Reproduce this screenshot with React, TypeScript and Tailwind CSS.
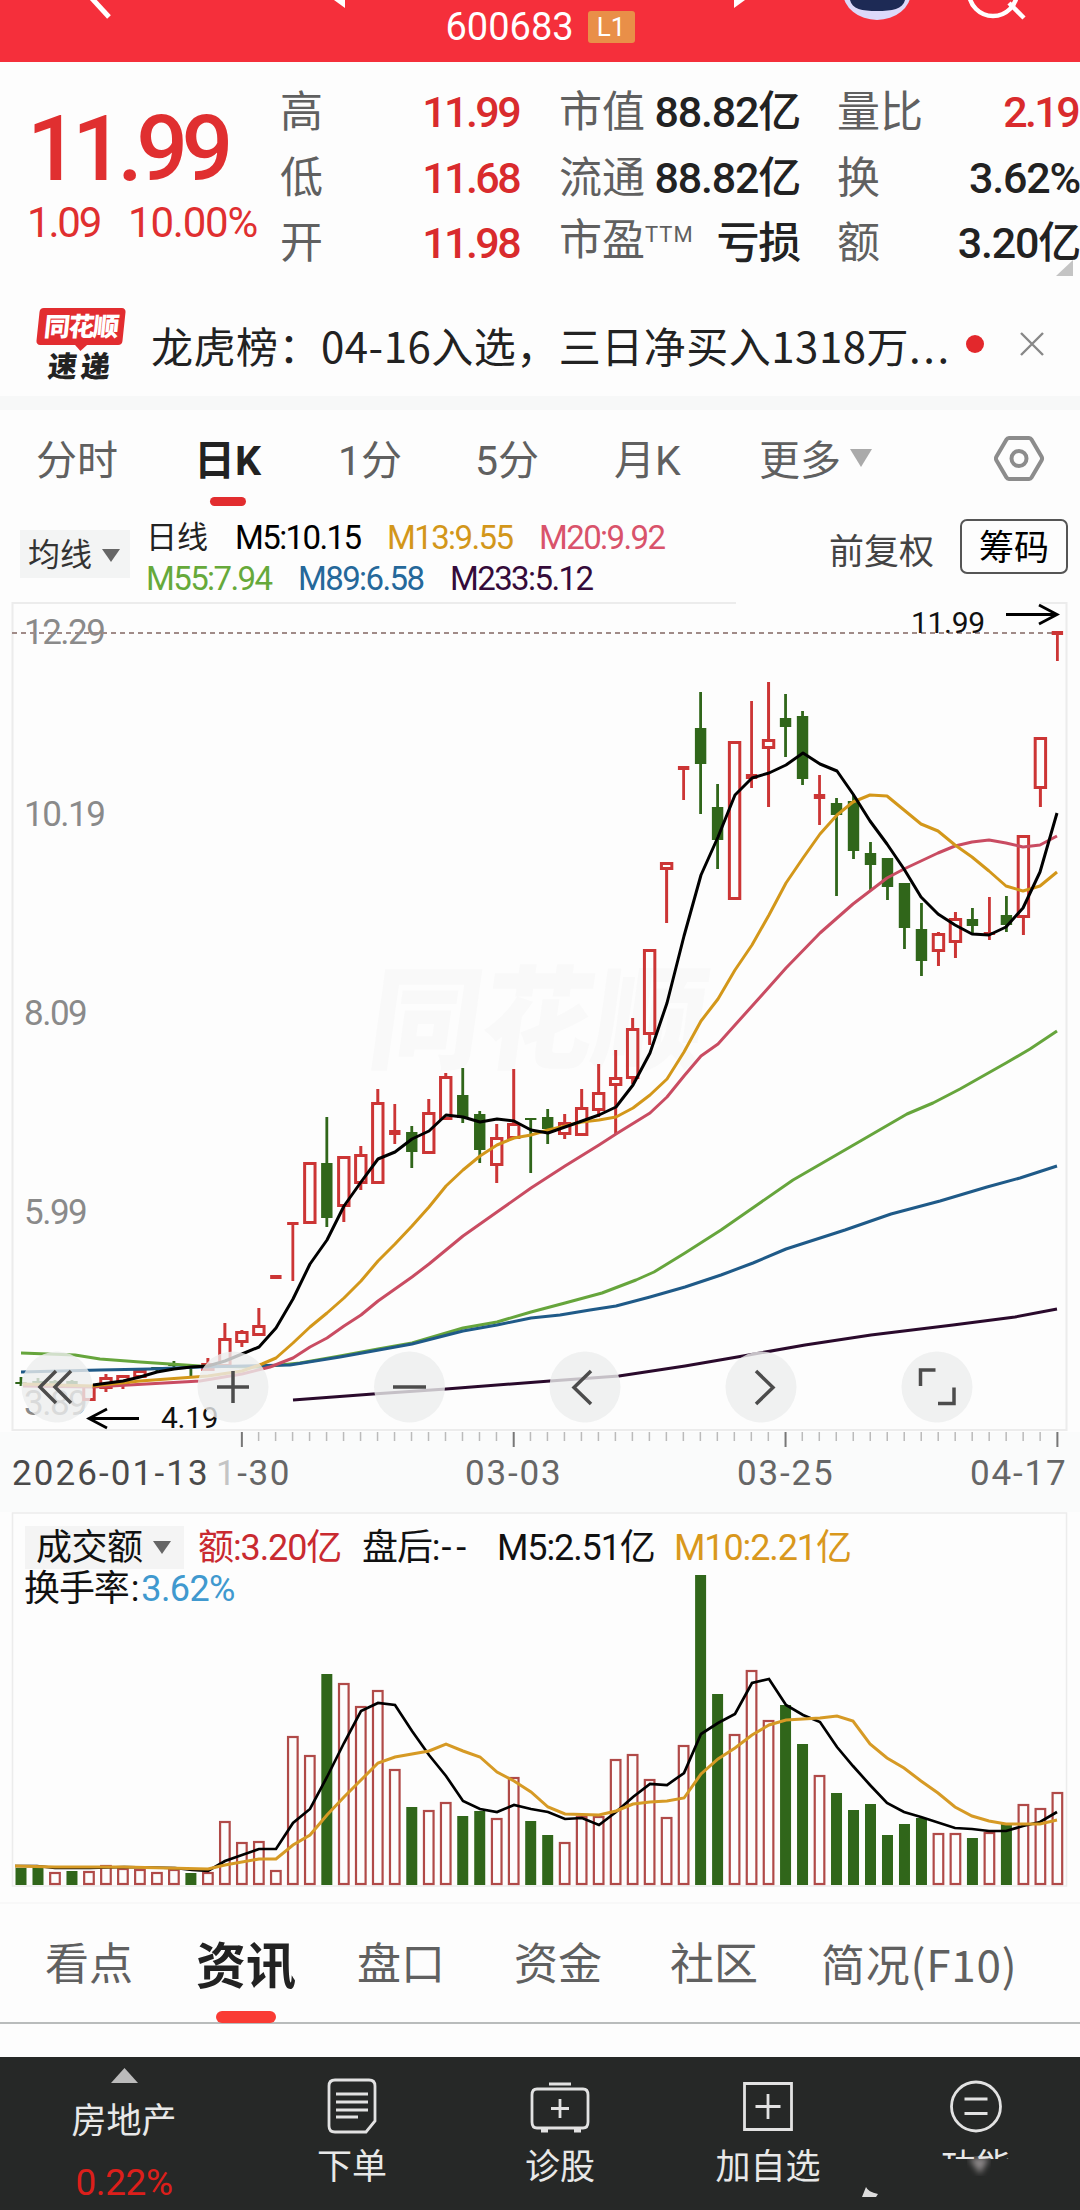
import type { ReactNode } from 'react'
import clsx from 'clsx'

// x of the n-th trading day, shared by the price and the turnover chart
const dayX = (n: number) => 21 + n * 16.99

type Candle = ['r' | 'g', number, number, number, number]

// colour, high, body top, body bottom, low
const candles: Candle[] = [
  ['g', 1377, 1382, 1384, 1386],
  ['g', 1378, 1381, 1385, 1386],
  ['g', 1380, 1381, 1385, 1388],
  ['g', 1380, 1381, 1386, 1388],
  ['r', 1386, 1386, 1400, 1400],
  ['r', 1374, 1378, 1388, 1392],
  ['r', 1376, 1376, 1385, 1389],
  ['r', 1369, 1371, 1377, 1377],
  ['g', 1367, 1367, 1369, 1372],
  ['g', 1361, 1364, 1366, 1367],
  ['g', 1366, 1366, 1368, 1376],
  ['r', 1358, 1364, 1370, 1370],
  ['r', 1323, 1339, 1366, 1366],
  ['r', 1330, 1332, 1342, 1347],
  ['r', 1308, 1326, 1335, 1335],
  ['r', 1275, 1275, 1279, 1279],
  ['r', 1222, 1222, 1225, 1281],
  ['r', 1162, 1163, 1223, 1223],
  ['g', 1117, 1163, 1218, 1227],
  ['r', 1157, 1157, 1206, 1222],
  ['r', 1146, 1155, 1183, 1190],
  ['r', 1089, 1103, 1183, 1183],
  ['r', 1104, 1130, 1135, 1144],
  ['g', 1126, 1132, 1152, 1168],
  ['r', 1099, 1113, 1153, 1153],
  ['r', 1073, 1077, 1119, 1119],
  ['g', 1068, 1095, 1118, 1123],
  ['g', 1111, 1114, 1150, 1163],
  ['r', 1124, 1138, 1165, 1183],
  ['r', 1069, 1124, 1138, 1138],
  ['g', 1118, 1118, 1120, 1173],
  ['g', 1109, 1117, 1129, 1144],
  ['r', 1114, 1123, 1134, 1139],
  ['r', 1089, 1108, 1135, 1135],
  ['r', 1064, 1093, 1110, 1117],
  ['r', 1050, 1078, 1085, 1134],
  ['r', 1018, 1029, 1078, 1084],
  ['r', 949, 950, 1034, 1045],
  ['r', 862, 863, 869, 923],
  ['r', 766, 766, 770, 800],
  ['g', 692, 728, 764, 814],
  ['g', 784, 807, 840, 869],
  ['r', 741, 742, 899, 899],
  ['r', 701, 774, 779, 788],
  ['r', 682, 740, 748, 807],
  ['g', 694, 718, 727, 757],
  ['g', 711, 716, 779, 785],
  ['r', 775, 794, 799, 825],
  ['g', 798, 803, 815, 896],
  ['g', 794, 801, 851, 859],
  ['g', 842, 853, 865, 890],
  ['g', 858, 858, 887, 900],
  ['g', 883, 883, 928, 949],
  ['g', 903, 929, 961, 976],
  ['r', 932, 934, 951, 966],
  ['r', 912, 919, 942, 958],
  ['g', 908, 919, 926, 934],
  ['r', 897, 932, 935, 940],
  ['g', 896, 915, 925, 932],
  ['r', 835, 836, 917, 935],
  ['r', 737, 738, 788, 807],
  ['r', 631, 631, 635, 661],
]

const turnover = [
  'g1868', 'g1866', 'r1872', 'g1871', 'r1871', 'r1865', 'r1868', 'r1869', 'r1872', 'r1869',
  'g1873', 'r1872', 'r1821', 'r1842', 'r1841', 'r1870', 'r1736', 'r1755', 'g1674', 'r1683',
  'r1706', 'r1690', 'r1769', 'g1807', 'r1810', 'r1802', 'g1816', 'g1811', 'r1818', 'r1777',
  'g1821', 'g1835', 'r1842', 'r1816', 'r1816', 'r1759', 'r1754', 'r1779', 'r1817', 'r1745',
  'g1575', 'g1694', 'r1734', 'r1670', 'r1720', 'g1705', 'g1744', 'r1775', 'g1793', 'g1810',
  'g1804', 'g1835', 'g1824', 'g1818', 'r1833', 'r1833', 'g1838', 'r1832', 'g1823', 'r1804',
  'r1808', 'r1792',
]

const priceLines = [
  {
    color: '#66a53c',
    points:
      '21,1353 75,1355 100,1359 140,1362 200,1366 260,1367 300,1363 340,1356 378,1349 412,1343 463,1328 497,1322 531,1312 565,1303 602,1293 636,1280 654,1272 685,1253 721,1230 757,1205 793,1180 857,1143 907,1114 933,1103 960,1089 1006,1063 1030,1049 1057,1031',
  },
  {
    color: '#1f5a88',
    points:
      '21,1372 100,1370 150,1369 200,1367 290,1365 340,1357 412,1344 463,1331 497,1325 531,1318 560,1315 590,1310 616,1306 650,1297 685,1287 721,1275 753,1263 786,1249 845,1230 891,1214 940,1201 987,1187 1020,1178 1057,1166',
  },
  {
    color: '#2a0a2c',
    points:
      '293,1400 373,1394 446,1389 550,1381 619,1376 685,1366 743,1356 805,1345 871,1335 953,1325 1015,1317 1057,1309',
  },
  {
    color: '#c94c62',
    points:
      '23,1386 93,1387 200,1381 242,1374 270,1367 293,1358 310,1347 327,1338 344,1326 361,1315 378,1301 412,1277 429,1264 463,1236 497,1212 531,1188 565,1166 599,1145 616,1134 650,1113 667,1097 684,1076 701,1056 718,1044 735,1025 753,1005 786,968 820,933 853,904 887,878 904,869 921,861 938,853 955,846 972,842 989,840 1006,843 1023,847 1040,845 1057,836',
  },
  {
    color: '#d3971a',
    points:
      '23,1384 93,1386 140,1381 208,1376 242,1371 262,1364 276,1358 293,1343 310,1327 327,1313 344,1298 361,1281 378,1261 395,1244 412,1226 429,1207 446,1186 463,1170 480,1156 497,1145 514,1138 531,1135 548,1130 582,1122 599,1120 616,1117 633,1108 650,1095 667,1079 684,1052 701,1021 718,999 735,970 752,945 769,915 786,883 803,858 820,834 837,815 853,802 870,795 887,796 904,810 921,824 938,831 955,845 972,857 989,871 1006,886 1023,891 1040,886 1057,872',
  },
  {
    color: '#000000',
    points:
      '93,1385 123,1381 140,1377 157,1372 174,1369 191,1367 208,1366 225,1361 242,1354 259,1347 276,1328 293,1299 310,1264 327,1240 344,1206 361,1182 378,1159 395,1152 412,1139 429,1131 446,1115 463,1117 480,1122 497,1119 514,1121 531,1130 548,1133 565,1127 582,1121 599,1115 616,1107 633,1085 650,1053 667,1003 684,936 701,875 718,837 735,795 752,778 769,773 786,765 803,753 820,764 837,771 853,794 870,821 887,844 904,869 921,897 938,914 955,925 972,934 989,935 1006,927 1023,908 1040,872 1057,813',
  },
]

const volumeM5 =
  '15,1866 37,1866 55,1868 90,1868 124,1867 175,1868 192,1870 208,1871 225,1861 242,1855 259,1849 276,1849 293,1823 310,1809 327,1777 344,1743 361,1711 378,1703 395,1705 412,1731 429,1755 446,1776 463,1801 480,1809 497,1812 514,1805 531,1809 548,1812 565,1819 582,1818 599,1825 616,1812 633,1797 650,1784 667,1785 684,1773 701,1734 718,1723 735,1714 752,1683 769,1679 786,1705 803,1715 820,1722 837,1747 853,1766 870,1785 887,1803 904,1812 921,1817 955,1828 972,1829 989,1831 1006,1831 1023,1826 1040,1822 1057,1812'
const volumeM10 =
  '15,1866 55,1867 124,1867 208,1869 225,1865 259,1859 276,1859 293,1845 310,1835 327,1815 344,1797 361,1780 378,1763 395,1757 429,1751 446,1744 463,1751 480,1757 497,1772 514,1781 531,1792 548,1807 565,1814 599,1815 616,1811 633,1804 650,1802 667,1801 684,1798 701,1774 718,1759 735,1748 752,1735 769,1725 786,1720 820,1718 837,1716 853,1721 870,1744 887,1758 904,1768 921,1781 938,1793 955,1807 972,1816 989,1821 1006,1824 1040,1824 1057,1820'

export default function App() {
  return (
    <main className="flex h-[2210px] w-[1080px] flex-col overflow-hidden bg-[#fdfdfd] font-['Roboto','Noto_Sans_CJK_SC',sans-serif] whitespace-nowrap text-[#222]">
      <TopBar />
      <Quote />
      <NewsStrip />
      <div className="h-[14px] shrink-0 bg-[#f7f8f8]" />
      <PeriodTabs />
      <AverageLegend />
      <PriceChart />
      <DateAxis />
      <TurnoverChart />
      <InfoTabs />
      <BottomBar />
    </main>
  )
}

function TopBar() {
  return (
    <header className="relative flex h-[62px] shrink-0 items-start justify-center bg-[#f52f3b]">
      <svg className="absolute inset-0" width="1080" height="62" viewBox="0 0 1080 62">
        <path d="M86-8 109 17" stroke="#fff" strokeWidth="5" />
        <path d="M334 0h11v8zM745 0h-11v8z" fill="#fff" />
        <ellipse cx="877" cy="-8" rx="34" ry="28" fill="#dcd9fa" />
        <path d="M850 0c2 9 12 11 27 11s26-2 28-11z" fill="#1d2a55" />
        <circle cx="993" cy="-8" r="24" fill="none" stroke="#fff" strokeWidth="4.500" />
        <path d="m1009 3 15 15" stroke="#fff" strokeWidth="4.500" />
      </svg>
      <div className="flex items-center gap-[13px]">
        <span className="w-[129px] pt-px text-[38px] leading-[52px] text-white">600683</span>
        <span className="mt-[1px] flex h-[32px] w-[47px] items-center justify-center rounded-[3px] bg-[#e98f48] text-[26px] text-white">
          L1
        </span>
      </div>
    </header>
  )
}

function Quote() {
  return (
    <section className="flex h-[228px] shrink-0 pt-[18px]">
      <div className="w-[280px] shrink-0 text-[#e02f30]">
        <p className="mt-[21px] pl-[27px] text-[91px] leading-[96px] font-medium tracking-[-6.5px]">
          11.99
        </p>
        <p className="flex pt-[1px] pl-[27px] text-[42px] leading-[50px] tracking-[-1.2px]">
          <span className="w-[101px] tracking-[-2.2px]">1.09</span>
          <span>10.00%</span>
        </p>
      </div>
      <div className="w-[242px] shrink-0">
        <QuoteRow label="高" value="11.99" tone="up" />
        <QuoteRow label="低" value="11.68" tone="up" />
        <QuoteRow label="开" value="11.98" tone="up" />
      </div>
      <div className="ml-[37px] w-[242px] shrink-0">
        <QuoteRow label="市值" value="88.82亿" />
        <QuoteRow label="流通" value="88.82亿" />
        <QuoteRow
          label={
            <>
              市盈<span className="relative -top-[13px] text-[22px] tracking-[1px]">TTM</span>
            </>
          }
          value="亏损"
        />
      </div>
      <div className="relative ml-[36px] w-[244px] shrink-0">
        <QuoteRow label="量比" value="2.19" tone="up" />
        <QuoteRow label="换" value="3.62%" />
        <QuoteRow label="额" value="3.20亿" />
        <svg className="absolute right-[8px] bottom-[14px]" width="17" height="16">
          <path d="M17 0v16H0z" fill="#c4c4c4" />
        </svg>
      </div>
    </section>
  )
}

function QuoteRow({ label, value, tone }: { label: ReactNode; value: string; tone?: 'up' }) {
  return (
    <div className="flex h-[65.5px] items-center justify-between text-[43px] leading-[65px]">
      <span className="text-[#606060]">{label}</span>
      <span
        className={clsx(
          'font-medium',
          tone === 'up'
            ? 'pr-[3px] tracking-[-2.6px] text-[#d92b2d]'
            : 'pr-[1px] tracking-[-1.2px] text-[#222]',
        )}
      >
        {value}
      </span>
    </div>
  )
}

function NewsStrip() {
  return (
    <section className="flex h-[106px] shrink-0 items-start">
      <div className="ml-[38px] w-[113px] pt-[18px]">
        <div className="relative flex h-[37px] w-[86px] -skew-x-6 items-center justify-center rounded-[4px] bg-[#e22d30] text-[26px] leading-none font-black tracking-[-1.5px] text-white">
          同花顺
          <svg className="absolute top-[36px] left-[38px]" width="14" height="7">
            <path d="M0 0h14L7 7z" fill="#e22d30" />
          </svg>
        </div>
        <p className="mt-[7px] ml-[10px] w-[70px] -skew-x-6 text-[29px] leading-[30px] font-black tracking-[4px] text-[#222]">
          速递
        </p>
      </div>
      <p className="w-[806px] pt-[23px] font-['Noto_Sans_CJK_SC',sans-serif] text-[42px] leading-[64px] tracking-[0.5px]">
        龙虎榜：04-16入选，三日净买入1318万<span className="tracking-[2.5px]">...</span>
      </p>
      <span className="mt-[45px] ml-[9px] size-[18px] rounded-full bg-[#e3282c]" />
      <svg className="mt-[42px] ml-[35px]" width="26" height="24" viewBox="0 0 26 24">
        <path d="m2 1 22 22M24 1 2 23" stroke="#888" strokeWidth="2.400" />
      </svg>
    </section>
  )
}

function PeriodTabs() {
  return (
    <nav className="flex h-[104px] shrink-0 items-start pt-[20px] pl-[36px] text-[41px] leading-[62px] text-[#606060]">
      <span className="w-[158px]">分时</span>
      <span className="flex w-[144px] flex-col font-bold text-[#222]">
        日K
        <i className="mt-[5px] ml-[16px] h-[9px] w-[36px] rounded-full bg-[#e22d2f]" />
      </span>
      <span className="w-[137px]">1分</span>
      <span className="w-[139px]">5分</span>
      <span className="w-[145px]">月K</span>
      <span className="w-[91px]">更多</span>
      <svg className="mt-[19px]" width="23" height="18">
        <path d="M0 0h22L11 18z" fill="#aaa" />
      </svg>
      <svg className="mt-[5px] ml-[121px]" width="52" height="48" viewBox="0 0 52 48">
        <path
          d="M15 3h20a3 3 0 0 1 2.500 1.500l10 17a4 4 0 0 1 0 4l-10 17a3 3 0 0 1-2.500 1.500H15a3 3 0 0 1-2.500-1.500l-10-17a4 4 0 0 1 0-4l10-17A3 3 0 0 1 15 3z"
          fill="none"
          stroke="#8c8c8c"
          strokeWidth="4"
        />
        <circle cx="25" cy="23.500" r="7.500" fill="none" stroke="#8c8c8c" strokeWidth="4" />
      </svg>
    </nav>
  )
}

function AverageLegend() {
  return (
    <section className="flex h-[88px] shrink-0 items-start">
      <div className="mt-[16px] ml-[20px] flex h-[48px] w-[110px] items-center gap-[10px] bg-[#f3f4f4] pt-[2px] pl-[8px] text-[32px] text-[#333]">
        均线
        <Caret />
      </div>
      <div className="ml-[16px] w-[683px] text-[33px] leading-[41px] tracking-[-1.6px]">
        <p className="flex pt-[3px]">
          <span className="w-[89px] text-[31px] tracking-normal">日线</span>
          <span className="w-[152px] text-black">M5:10.15</span>
          <span className="w-[152px] text-[#d3971a]">M13:9.55</span>
          <span className="text-[#d9536b]">M20:9.92</span>
        </p>
        <p className="flex">
          <span className="w-[152px] text-[#66a93a]">M55:7.94</span>
          <span className="w-[152px] text-[#25689a]">M89:6.58</span>
          <span className="text-[#350b3a]">M233:5.12</span>
        </p>
      </div>
      <span className="mt-[13px] w-[131px] text-[35px] leading-[52px] text-[#444]">前复权</span>
      <span className="mt-[5px] flex h-[55px] w-[108px] items-center justify-center rounded-[7px] border-2 border-[#555] pt-[4px] text-[35px] leading-none text-black">
        筹码
      </span>
    </section>
  )
}

function Caret() {
  return (
    <svg width="18" height="13">
      <path d="M0 0h18L9 13z" fill="#666" />
    </svg>
  )
}

function PriceChart() {
  return (
    <section className="h-[830px] shrink-0">
      <svg className="overflow-visible" width="1080" height="830" viewBox="0 602 1080 830">
        <path d="M736 603H12.500V1430H1066.500V603H1040" fill="none" stroke="#ececec" strokeWidth="2" />
        <text
          x="368"
          y="1060"
          fontSize="112"
          fontWeight="900"
          fill="#f9f9f9"
          transform="skewX(-8) translate(146 0)"
        >
          同花顺
        </text>
        <g fontSize="35" fill="#8a8a8a" letterSpacing="-1.500">
          <text x="24" y="644">12.29</text>
          <text x="24" y="826">10.19</text>
          <text x="24" y="1025">8.09</text>
          <text x="24" y="1224">5.99</text>
          <text x="24" y="1415">3.89</text>
        </g>
        <path d="M12 633H1052" stroke="#a08b88" strokeWidth="1.800" strokeDasharray="5 4" />

        {candles.map((candle, n) => (
          <CandleMark key={n} n={n} candle={candle} />
        ))}
        {priceLines.map((line) => (
          <polyline
            key={line.color}
            points={line.points}
            fill="none"
            stroke={line.color}
            strokeWidth="3"
            strokeLinejoin="round"
          />
        ))}

        <g fontSize="30" fill="#111" letterSpacing="-0.300">
          <text x="911" y="633">11.99</text>
          <text x="161" y="1428">4.19</text>
        </g>
        <path
          d="M1006 614.500h51M1039 605l18 9.500-18 9.500M139 1418.500H90M107 1409l-18 9.500 18 9.500"
          fill="none"
          stroke="#000"
          strokeWidth="2.800"
        />

        {[57, 233, 409.5, 585, 761, 937].map((x) => (
          <circle key={x} cx={x} cy="1387" r="35.500" fill="#ecedee" fillOpacity="0.800" />
        ))}
        <g fill="none" stroke="#4c4c4c" strokeWidth="3.500">
          <path d="m56 1371-16 16 16 16M71 1371l-16 16 16 16" />
          <path d="M217 1387h32M233 1371v32M393 1387h33" />
          <path d="m591 1371-17 16.500 17 16.500M756 1371l17 16.500-17 16.500" />
          <path d="M920.500 1386v-16h15M938 1403.500h16v-16" />
        </g>
      </svg>
    </section>
  )
}

function CandleMark({ n, candle }: { n: number; candle: Candle }) {
  const [tone, high, top, bottom, low] = candle
  const x = dayX(n)
  const color = tone === 'r' ? '#cc3535' : '#30661a'

  // thin bodies have no room for a hollow centre
  if (tone === 'g' || bottom - top < 6) {
    return (
      <g fill={color}>
        <rect x={x - 1.4} y={high} width="2.800" height={low - high} />
        <rect x={x - 5.7} y={top} width="11.400" height={bottom - top} />
      </g>
    )
  }
  return (
    <g stroke={color} strokeWidth="3" fill="none">
      <path d={`M${x} ${high}V${top}M${x} ${bottom}V${low}`} />
      <rect x={x - 5.2} y={top + 0.5} width="10.400" height={bottom - top - 1} />
    </g>
  )
}

function DateAxis() {
  return (
    <section className="h-[80px] shrink-0 bg-[#fafbfb]">
      <svg className="block" width="1080" height="18" viewBox="0 1432 1080 18">
        {Array.from({ length: 49 }, (_, k) => {
          const long = k % 16 === 0
          return (
            <rect
              key={k}
              x={dayX(k + 13) - 1}
              y="1432"
              width={long ? 2 : 1.5}
              height={long ? 15 : 9}
              fill={long ? '#777' : '#bbb'}
            />
          )
        })}
      </svg>
      <div className="flex pt-px pl-[12px] text-[35px] leading-[46px] text-[#666]">
        <span className="w-[204px] tracking-[2.1px] text-[#4a4a4a]">2026-01-13</span>
        <span className="w-[249px] tracking-[1.6px]">
          <span className="text-[#c4c4c4]">1</span>-30
        </span>
        <span className="w-[272px] tracking-[1.8px]">03-03</span>
        <span className="w-[233px] tracking-[1.8px]">03-25</span>
        <span className="tracking-[1.8px]">04-17</span>
      </div>
    </section>
  )
}

function TurnoverChart() {
  return (
    <section className="relative h-[390px] shrink-0">
      <svg className="absolute inset-0" width="1080" height="390" viewBox="0 1512 1080 390">
        <rect x="12.500" y="1513" width="1054" height="373" fill="none" stroke="#ececec" strokeWidth="1.500" />
        {turnover.map((bar, n) => {
          const top = Number(bar.slice(1))
          return bar[0] === 'g' ? (
            <rect key={n} x={dayX(n) - 5.5} y={top} width="11" height={1885 - top} fill="#30661a" />
          ) : (
            <rect
              key={n}
              x={dayX(n) - 4.8}
              y={top + 1}
              width="9.600"
              height={1883 - top}
              fill="none"
              stroke="#b04a48"
              strokeWidth="2.200"
            />
          )
        })}
        <polyline points={volumeM5} fill="none" stroke="#000" strokeWidth="2.700" />
        <polyline points={volumeM10} fill="none" stroke="#d69a25" strokeWidth="3" />
      </svg>
      <div className="relative text-[36px] leading-[40px] tracking-[-1.1px]">
        <div className="flex items-center pt-[14px] pl-[25px] text-[#111]">
          <span className="mr-[14px] flex h-[43px] w-[159px] items-center gap-[10px] bg-[#f4f4f4] pl-[11px] tracking-[-0.5px]">
            成交额
            <Caret />
          </span>
          <span className="w-[164px] text-[#c92a30]">额:3.20亿</span>
          <span className="w-[135px]">
            盘后:<span className="pl-[2px] tracking-[5px]">--</span>
          </span>
          <span className="w-[177px]">M5:2.51亿</span>
          <span className="text-[#d9981c]">M10:2.21亿</span>
        </div>
        <p className="pl-[24px] text-[#111]">
          换手率<span className="pr-[3px] pl-[2px]">:</span>
          <span className="tracking-[-0.6px] text-[#4099cf]">3.62%</span>
        </p>
      </div>
    </section>
  )
}

function InfoTabs() {
  return (
    <nav className="flex h-[155px] shrink-0 flex-col border-t-2 border-[#f8f8f8]">
      <div className="flex h-[120px] items-start border-b-2 border-[#b9bcbc] pt-[28px] pl-[45px] text-[44px] leading-[66px] text-[#606060]">
        <span className="w-[151px]">看点</span>
        <span className="flex w-[161px] flex-col pt-[3px] text-[50px] leading-[64px] font-bold text-[#222]">
          资讯
          <i className="mt-[12px] ml-[20px] h-[12px] w-[60px] rounded-full bg-[#fa3b34]" />
        </span>
        <span className="w-[157px]">盘口</span>
        <span className="w-[156px]">资金</span>
        <span className="w-[151px]">社区</span>
        <span className="-mt-[2px] font-['Noto_Sans_CJK_SC',sans-serif] tracking-[0.8px]">
          简况(F10)
        </span>
      </div>
    </nav>
  )
}

function BottomBar() {
  return (
    <footer className="flex h-[153px] shrink-0 bg-[#262827] text-[35px] leading-[50px] text-[#e8e8e8]">
      <div className="flex w-[248px] flex-col items-center">
        <svg className="mt-[11px]" width="27" height="15">
          <path d="M13.500 0 27 15H0z" fill="#bbb" />
        </svg>
        <span className="mt-[14px]">房地产</span>
        <span className="mt-[11px] text-[37px] tracking-[-0.4px] text-[#dc1f1b]">0.22%</span>
      </div>
      <BarItem label="下单">
        <path d="M8 3h34q6 0 6 6v35l-9 11H8q-6 0-6-6V9q0-6 6-6z" />
        <path d="M9 17h32M9 25h32M9 33h32M9 40h22" />
      </BarItem>
      <BarItem label="诊股">
        <path d="M14 7h22M2 12q-5 0-5 6v27q0 6 5 6h46q5 0 5-6V18q0-6-5-6zM6 54h7M39 54h7" />
        <path d="M25 22v19M16 31.500h18" />
      </BarItem>
      <BarItem label="加自选">
        <path d="M1.500 6.500h47v46h-47zM25 17v25M12.500 29.500h25" />
      </BarItem>
      <div className="relative">
        <BarItem label="功能">
          <circle cx="25" cy="29.500" r="24.500" />
          <path d="M13.500 22h23M13.500 36.500h23" />
        </BarItem>
        <svg className="absolute top-[88px] left-0 overflow-visible" width="208" height="65">
          <defs>
            <filter id="smudge">
              <feGaussianBlur stdDeviation="3" />
            </filter>
          </defs>
          <path d="M40 14h150v50H40z" fill="#262827" />
          <path d="m97 13h20l-9 16z" fill="#d8cfd0" opacity="0.600" filter="url(#smudge)" />
          <path d="M-6 42q2 5 12 7l-2 3H-10z" fill="#ddd" />
        </svg>
      </div>
    </footer>
  )
}

function BarItem({ label, children }: { label: string; children: ReactNode }) {
  return (
    <div className="flex w-[208px] flex-col items-center pt-[20px]">
      <svg
        className="overflow-visible"
        width="50"
        height="58"
        viewBox="0 0 50 58"
        fill="none"
        stroke="#e2e2e2"
        strokeWidth="2.800"
      >
        {children}
      </svg>
      <span className="mt-[8px]">{label}</span>
    </div>
  )
}
